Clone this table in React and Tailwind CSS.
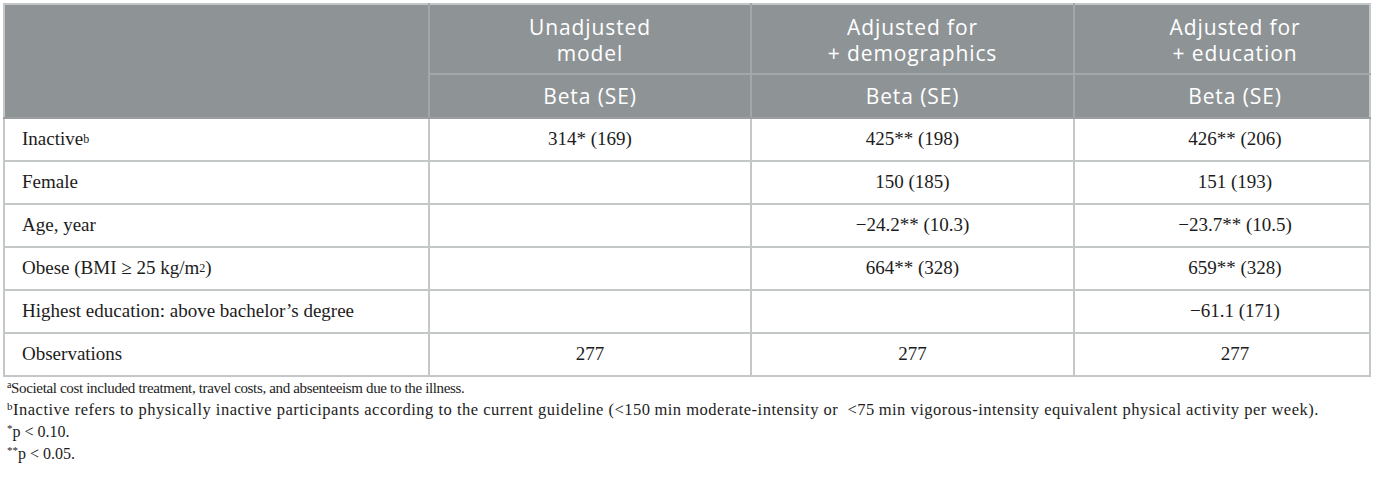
import React from 'react';

const rows = [
  { label: <>Inactive<sup className="text-[12px] relative -top-[2px]">b</sup></>, cells: ['314* (169)', '425** (198)', '426** (206)'] },
  { label: 'Female', cells: ['', '150 (185)', '151 (193)'] },
  { label: 'Age, year', cells: ['', '\u221224.2** (10.3)', '\u221223.7** (10.5)'] },
  { label: <>Obese (BMI ≥ 25 kg/m<sup className="text-[12px] relative -top-[2px]">2</sup>)</>, cells: ['', '664** (328)', '659** (328)'] },
  { label: 'Highest education: above bachelor\u2019s degree', cells: ['', '', '\u221261.1 (171)'] },
  { label: 'Observations', cells: ['277', '277', '277'] },
];

const App = () => {
  return (
    <div className="w-[1373px] h-[479px] bg-white overflow-hidden pt-[3px] pl-[3px]">
      <table className="table-fixed border-collapse w-[1366px] border-2 border-[#c4c7c7]">
        <colgroup>
          <col className="w-[425px]" />
          <col className="w-[322px]" />
          <col className="w-[323px]" />
          <col className="w-[296px]" />
        </colgroup>
        <thead className="bg-[#8e9396] text-white font-['Open_Sans',sans-serif] text-[21px] leading-[26px] tracking-[0.9px]">
          <tr className="h-[70px]">
            <th rowSpan={2} className="border-r-2 border-[#a3a7a9] border-b-2 border-b-[#9a9ea1]"></th>
            <th className="font-normal text-center pt-[2px] border-x-2 border-b-2 border-[#a3a7a9]">Unadjusted<br />model</th>
            <th className="font-normal text-center pt-[2px] border-x-2 border-b-2 border-[#a3a7a9]">Adjusted for<br />+ demographics</th>
            <th className="font-normal text-center pt-[2px] pl-[26px] border-l-2 border-b-2 border-[#a3a7a9]">Adjusted for<br />+ education</th>
          </tr>
          <tr className="h-[44px]">
            <th className="font-normal text-center border-x-2 border-[#a3a7a9] border-b-2 border-b-[#9a9ea1]">Beta (SE)</th>
            <th className="font-normal text-center border-x-2 border-[#a3a7a9] border-b-2 border-b-[#9a9ea1]">Beta (SE)</th>
            <th className="font-normal text-center pl-[26px] border-l-2 border-[#a3a7a9] border-b-2 border-b-[#9a9ea1]">Beta (SE)</th>
          </tr>
        </thead>
        <tbody className="font-['Liberation_Serif',serif] text-[19px] text-[#1c1c1c]">
          {rows.map((row, i) => (
            <tr key={i} className="h-[43px]">
              <td className="pl-[17px] border-2 border-[#c4c7c7]">{row.label}</td>
              <td className="text-center border-2 border-[#c4c7c7]">{row.cells[0]}</td>
              <td className="text-center border-2 border-[#c4c7c7]">{row.cells[1]}</td>
              <td className="text-center pl-[26px] border-2 border-[#c4c7c7]">{row.cells[2]}</td>
            </tr>
          ))}
        </tbody>
      </table>

      {/* footnotes */}
      <div className="pl-[4px] font-['Liberation_Serif',serif] leading-[22px] text-[#1c1c1c]">
        <p className="text-[15px] tracking-[-0.35px]"><sup className="text-[10px]">a</sup>Societal cost included treatment, travel costs, and absenteeism due to the illness.</p>
        <p className="text-[16.5px] tracking-[0.5px]"><sup className="text-[11px]">b</sup>Inactive refers to physically inactive participants according to the current guideline (&lt;150&#8201;min moderate-intensity or &nbsp;&lt;75&#8201;min vigorous-intensity equivalent physical activity per week).</p>
        <p className="text-[16px]"><sup className="text-[11px]">*</sup>p &lt; 0.10.</p>
        <p className="text-[16px]"><sup className="text-[11px]">**</sup>p &lt; 0.05.</p>
      </div>
    </div>
  );
};

export default App;
